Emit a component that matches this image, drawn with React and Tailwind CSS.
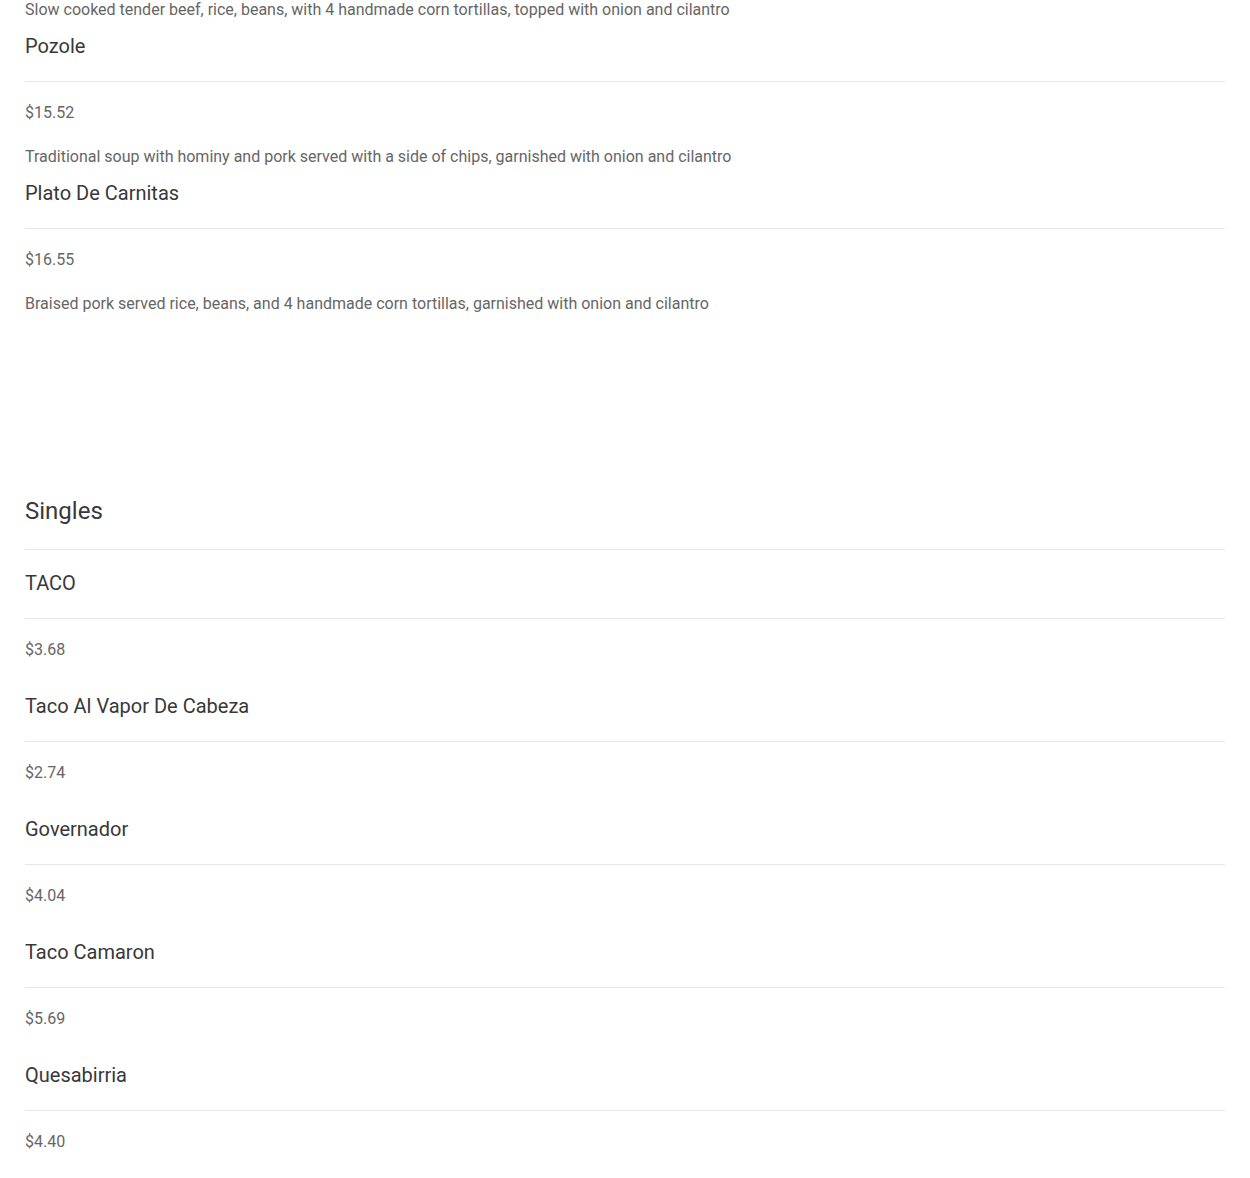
const sections = [
  {
    title: null,
    items: [
      {
        name: "Pozole",
        price: "$15.52",
        desc: "Traditional soup with hominy and pork served with a side of chips, garnished with onion and cilantro",
      },
      {
        name: "Plato De Carnitas",
        price: "$16.55",
        desc: "Braised pork served rice, beans, and 4 handmade corn tortillas, garnished with onion and cilantro",
      },
    ],
  },
  {
    title: "Singles",
    items: [
      { name: "TACO", price: "$3.68" },
      { name: "Taco Al Vapor De Cabeza", price: "$2.74" },
      { name: "Governador", price: "$4.04" },
      { name: "Taco Camaron", price: "$5.69" },
      {
        name: "Quesabirria",
        price: "$4.40",
        desc: "Crispy corn tortilla with melted cheese and birria, served with consomé",
      },
    ],
  },
];

const MenuItem = ({ name, price, desc }) => (
  <div className="flex flex-col pb-[10px]">
    <h3 className="text-[20px] leading-7 text-[#383838] pb-[21px] border-b border-[#e6e6e6]">
      {name}
    </h3>
    <p className="mt-[19px] mb-5 text-base leading-6 text-[#666]">{price}</p>
    {desc && <p className="text-base leading-6 text-[#666]">{desc}</p>}
  </div>
);

export default function App() {
  return (
    <div
      className="bg-white min-h-screen px-[25px] overflow-hidden"
      style={{ fontFamily: "Roboto, 'Liberation Sans', sans-serif" }}
    >
      <div className="w-[1200px] -mt-[2px] flex flex-col">
        {/* tail of the previous item */}
        <p className="mb-[10px] text-base leading-6 text-[#666]">
          Slow cooked tender beef, rice, beans, with 4 handmade corn tortillas, topped with onion and cilantro
        </p>

        {sections[0].items.map((item) => (
          <MenuItem key={item.name} {...item} />
        ))}

        {/* Singles */}
        <section className="mt-[169px]">
          <h2 className="text-2xl leading-8 text-[#383838] pb-[22px] border-b border-[#e6e6e6]">
            {sections[1].title}
          </h2>
          <div className="mt-[19px] flex flex-col">
            {sections[1].items.map((item) => (
              <MenuItem key={item.name} {...item} />
            ))}
          </div>
        </section>
      </div>
    </div>
  );
}
